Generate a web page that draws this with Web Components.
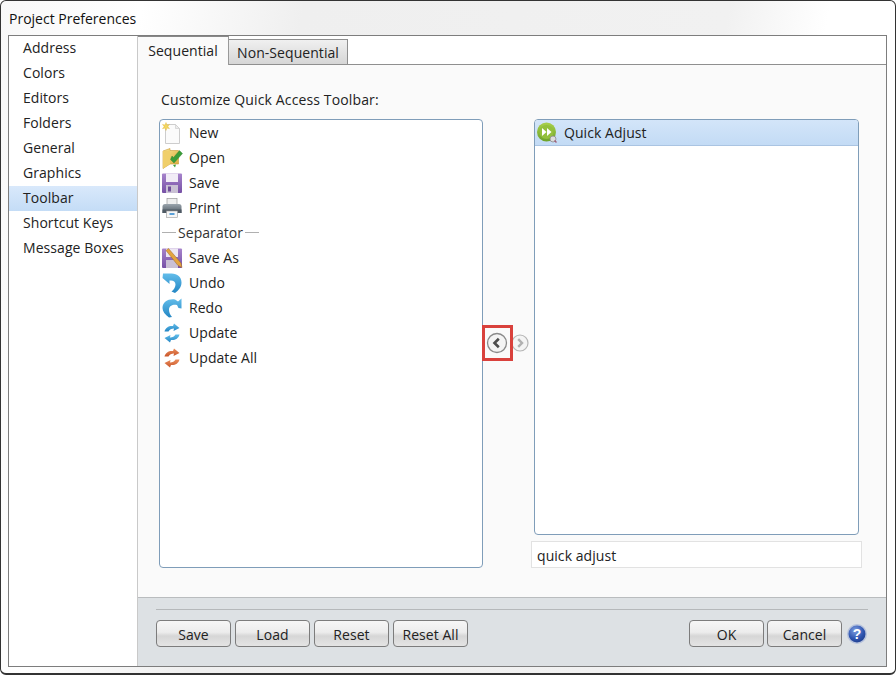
<!DOCTYPE html>
<html>
<head>
<meta charset="utf-8">
<title>Project Preferences</title>
<style>
  html, body { margin: 0; padding: 0; width: 896px; height: 675px; overflow: hidden; background: #fff; }
  body { font: 14px "Open Sans", "Liberation Sans", sans-serif; color: #222; letter-spacing: .06px; }
</style>
</head>
<body>

<pp-window heading="Project Preferences">
  <pp-nav slot="nav">
    <pp-nav-item>Address</pp-nav-item>
    <pp-nav-item>Colors</pp-nav-item>
    <pp-nav-item>Editors</pp-nav-item>
    <pp-nav-item>Folders</pp-nav-item>
    <pp-nav-item>General</pp-nav-item>
    <pp-nav-item>Graphics</pp-nav-item>
    <pp-nav-item selected>Toolbar</pp-nav-item>
    <pp-nav-item>Shortcut Keys</pp-nav-item>
    <pp-nav-item>Message Boxes</pp-nav-item>
  </pp-nav>

  <pp-tabs slot="tabs"></pp-tabs>

  <pp-toolbar-editor slot="body">
    <pp-listbox slot="left">
      <pp-row icon="new">New</pp-row>
      <pp-row icon="open">Open</pp-row>
      <pp-row icon="save">Save</pp-row>
      <pp-row icon="print">Print</pp-row>
      <pp-separator>Separator</pp-separator>
      <pp-row icon="saveas">Save As</pp-row>
      <pp-row icon="undo">Undo</pp-row>
      <pp-row icon="redo">Redo</pp-row>
      <pp-row icon="update">Update</pp-row>
      <pp-row icon="updateall">Update All</pp-row>
    </pp-listbox>
    <pp-listbox slot="right">
      <pp-row icon="quick" selected>Quick Adjust</pp-row>
    </pp-listbox>
  </pp-toolbar-editor>

  <pp-button slot="footer-left">Save</pp-button>
  <pp-button slot="footer-left">Load</pp-button>
  <pp-button slot="footer-left">Reset</pp-button>
  <pp-button slot="footer-left">Reset All</pp-button>
  <pp-button slot="footer-right">OK</pp-button>
  <pp-button slot="footer-right" style="margin-left:-1px">Cancel</pp-button>
  <pp-help slot="footer-right"></pp-help>
</pp-window>

<script>
class EzElement extends HTMLElement {
  get stylez () { return `:host {display: block}`; }
  constructor () {
    super();
    this.shadow = this.attachShadow({ mode: 'open' });
  }
  connectedCallback () {
    this.shadow.innerHTML = `<style>${this.stylez}</style>${this.render()}`;
  }
  render () { return '<slot></slot>'; }
}

class PPWindow extends EzElement {
  get stylez () {
    return `
    :host {
      display: flex; flex-direction: column; box-sizing: border-box;
      width: 896px; height: 675px; padding: 0 8px 6px 7px;
      border: 1px solid #333; border-radius: 6px;
      border-bottom-width: 2px;
      background: linear-gradient(100deg, #f8f8f8 0%, #fff 14%, #efefef 30%, #f1f1f1 72%, #fff 82%);
    }
    header { height: 34px; line-height: 36px; padding-left: 1px; font-size: 14px; color: #111; flex: none; letter-spacing: 0; }
    .frame { flex: 1; display: flex; border: 1px solid #7d7d7d; min-height: 0; width: 879px; box-sizing: border-box; background: #fff; }
    .nav { width: 128px; flex: none; background: #fff; }
    .main { flex: 1; display: flex; flex-direction: column; min-width: 0; border-left: 1px solid #c9c9c9; }
    .content { flex: 1; display: flex; flex-direction: column; background: #fafafa; min-height: 0; }
    .footer { height: 69px; flex: none; box-sizing: border-box; background: #dde1e4; border-top: 1px solid #b9bcbe; padding: 11px 18px 0 18px; }
    .rule { height: 1px; background: #b5b8ba; margin-bottom: 10px; }
    .buttons { display: flex; justify-content: space-between; }
    .group { display: flex; gap: 4px; align-items: center; }
    `;
  }
  render () {
    return `
    <header>${this.getAttribute('heading')}</header>
    <div class="frame">
      <div class="nav"><slot name="nav"></slot></div>
      <div class="main">
        <div class="content">
          <slot name="tabs"></slot>
          <slot name="body"></slot>
        </div>
        <div class="footer">
          <div class="rule"></div>
          <div class="buttons">
            <div class="group"><slot name="footer-left"></slot></div>
            <div class="group"><slot name="footer-right"></slot></div>
          </div>
        </div>
      </div>
    </div>`;
  }
}

class PPNav extends EzElement {}

class PPNavItem extends EzElement {
  get stylez () {
    return `
    :host { display: block; height: 25px; line-height: 24px; padding-left: 14px; color: #222; }
    :host([selected]) { background: linear-gradient(#d9e9fb, #c4dcf6); }
    `;
  }
}

class PPTabs extends EzElement {
  get stylez () {
    return `
    :host { display: flex; height: 29px; align-items: flex-end; box-sizing: border-box; border-bottom: 1px solid #8f8f8f; flex: none; background: #fff; }
    .tab { box-sizing: border-box; }
    .on { width: 91px; height: 29px; line-height: 28px; text-align: center; background: #fafafa; border-top: 1px solid #888; border-right: 1px solid #999; margin-bottom: -1px; position: relative; }
    .off { width: 119px; height: 25px; line-height: 26px; text-align: center; background: linear-gradient(#f0f0f0, #d6d6d6); border: 1px solid #8e8e8e; border-bottom: 0; border-left: 0; }
    `;
  }
  render () {
    return `<div class="tab on">Sequential</div><div class="tab off">Non-Sequential</div>`;
  }
}

class PPToolbarEditor extends EzElement {
  get stylez () {
    return `
    :host { display: block; flex: 1; padding: 27px 0 0 21px; }
    .label { height: 27px; line-height: 16px; padding-left: 2px; letter-spacing: .13px; }
    .cols { display: grid; grid-template-columns: 324px 51px 325px; grid-template-rows: 416px 6px 27px; height: 449px; }
    .left { grid-row: 1 / 4; display: flex; }
    .arrows { grid-row: 1 / 4; position: relative; }
    .arrows .in { position: absolute; left: 3px; top: 213px; display: flex; gap: 3px; align-items: center; }
    .right { display: flex; }
    .filter { grid-column: 3; grid-row: 3; margin: 0 -3px; box-sizing: border-box; border: 1px solid #e2e2e2; background: #fff; line-height: 27px; padding-left: 5px; color: #222; height: 27px; }
    .hl { position: absolute; left: -1px; top: 206px; width: 31px; height: 36px; box-sizing: border-box; border: 3px solid #d9413c; }
    `;
  }
  render () {
    return `
    <div class="label">Customize Quick Access Toolbar:</div>
    <div class="cols">
      <div class="left"><slot name="left"></slot></div>
      <div class="arrows">
        <div class="in">
          <svg width="22" height="22" viewBox="0 0 22 22"><circle cx="11" cy="11" r="9.500" fill="#f4f4f4" stroke="#8a8a8a" stroke-width="1.300"/><path d="M12.800 6.800 8.500 11l4.300 4.200" fill="none" stroke="#4d4d4d" stroke-width="2.600"/></svg>
          <svg width="18" height="18" viewBox="0 0 18 18"><circle cx="9" cy="9" r="8" fill="#f4f4f4" stroke="#b5b5b5" stroke-width="1.200"/><path d="M7.200 5.200 11 9l-3.800 3.800" fill="none" stroke="#b0b0b0" stroke-width="2.400"/></svg>
        </div>
        <div class="hl"></div>
      </div>
      <div class="right"><slot name="right"></slot></div>
      <div class="filter">quick adjust</div>
    </div>`;
  }
}

class PPListbox extends EzElement {
  get stylez () {
    return `
    :host { display: block; flex: 1; box-sizing: border-box; border: 1px solid #7f9db9; border-radius: 4px; background: #fff; overflow: hidden; }
    `;
  }
}

// gradient ids don't cross shadow roots, so every icon svg carries its own defs
const DEFS = `<defs>
  <linearGradient id="gFolder" x1="0" y1="0" x2="1" y2="1"><stop offset="0" stop-color="#f9e691"/><stop offset="1" stop-color="#d9a63a"/></linearGradient>
  <linearGradient id="gPurple" x1="0" y1="0" x2="0" y2="1"><stop offset="0" stop-color="#a784cc"/><stop offset="1" stop-color="#7650a5"/></linearGradient>
  <linearGradient id="gBlue" x1="0" y1="0" x2="0" y2="1"><stop offset="0" stop-color="#63bdea"/><stop offset="1" stop-color="#2386c4"/></linearGradient>
  <linearGradient id="gOrange" x1="0" y1="0" x2="0" y2="1"><stop offset="0" stop-color="#ea8d5c"/><stop offset="1" stop-color="#c9562a"/></linearGradient>
  <linearGradient id="gGreen" x1="0" y1="0" x2="0" y2="1"><stop offset="0" stop-color="#a9d04c"/><stop offset="1" stop-color="#6ca32a"/></linearGradient>
  <linearGradient id="gGrey" x1="0" y1="0" x2="0" y2="1"><stop offset="0" stop-color="#9aa4ac"/><stop offset="1" stop-color="#505b65"/></linearGradient>
</defs>`;

const ICONS = {
  new: `<path d="M4.500 2.500h10l4 4v15h-14z" fill="#fbfbfb" stroke="#cdcdcd"/><path d="M14.500 2.500v4h4z" fill="#ececec" stroke="#cdcdcd" stroke-width=".7"/><path d="M5 .5l1 2.500 2.500-.6-1.600 2.100 1.600 2.200L6 6 5 8.500 4 6l-2.500.7 1.600-2.200L1.500 2.400 4 3z" fill="#f3d65e" stroke="#e4b93c" stroke-width=".4"/>`,
  open: `<path d="M2 4 9 1.500v2h8.500V17H9l-7 4.500z" fill="url(#gFolder)" stroke="#c99a35" stroke-width=".6"/><path d="M9 3.500 2 4v17.500L9 17z" fill="#f0cf6a"/><path d="M9.500 12.500 13 16l8.500-9.500-3-3-6 7-1.500-1.500z" fill="#3a9c38" stroke="#2d8030" stroke-width=".4"/><path d="M12 18l2 2.500 1-3z" fill="#3a9c38"/>`,
  save: `<rect x="1" y="1.500" width="20" height="19.500" rx="1" fill="url(#gPurple)"/><rect x="5" y="1.500" width="12" height="8.500" fill="#f1ecf6"/><rect x="5" y="13" width="12" height="8" fill="#c9c0d4"/><rect x="7" y="14.500" width="3" height="5" fill="#6f4d99"/>`,
  print: `<rect x="6" y="1.500" width="10" height="6" fill="#eee" stroke="#999" stroke-width=".7"/><path d="M1.500 9.500q0-2.500 2.500-2.500h14q2.500 0 2.500 2.500V16h-19z" fill="url(#gGrey)"/><rect x="1.500" y="12.500" width="19" height="3.500" fill="#4f5a64"/><rect x="5.500" y="14" width="11" height="6.500" fill="#f6f6f6" stroke="#999" stroke-width=".6"/><rect x="8.500" y="16" width="5" height="2" fill="#5aa0d8"/>`,
  saveas: `<rect x="1" y="1.500" width="20" height="19.500" rx="1" fill="url(#gPurple)"/><rect x="5" y="1.500" width="12" height="8.500" fill="#ece6f2"/><rect x="5" y="13" width="12" height="8" fill="#c9c0d4"/><path d="M5 3.500 7.500 1.500 20 16l1 4.500-4-2z" fill="#e3a43f" stroke="#9f642a" stroke-width=".5"/>`,
  undo: `<path d="M2 1.500h8.500c6 0 10 3.500 10 9 0 4.500-3 8-6.500 10.500l-3.500-1.500c2.500-2 4-4.500 4-7 0-2.500-2-4-4.500-4H8.500v3.500L1.500 6z" fill="url(#gBlue)"/>`,
  redo: `<path d="M20.500 1.500v10l-3-.5-1.500-3c-3.500-1-8 .5-8 4.500 0 3 1 5 3 7.500l-3 .5C4 17.500 1.500 14.500 1.500 11 1.500 5 7.500 1.500 14 2.500l3 2z" fill="url(#gBlue)"/>`,
  update: `<path d="M3.500 9.500C4.500 5.500 8 3.500 12 4l1-2.500 5.500 4.500-6 3 .5-2.500c-2.500 0-4.500 1-5.500 3z" fill="url(#gBlue)"/><path d="M18.500 12.500c-1 4-4.500 6-8.500 5.500l-1 2.500-5.500-4.500 6-3-.5 2.500c2.500 0 4.500-1 5.500-3z" fill="url(#gBlue)"/>`,
  updateall: `<path d="M3.500 9.500C4.500 5.500 8 3.500 12 4l1-2.500 5.500 4.500-6 3 .5-2.500c-2.500 0-4.500 1-5.500 3z" fill="url(#gOrange)"/><path d="M18.500 12.500c-1 4-4.500 6-8.500 5.500l-1 2.500-5.500-4.500 6-3-.5 2.500c2.500 0 4.500-1 5.500-3z" fill="url(#gOrange)"/>`,
  quick: `<circle cx="10.500" cy="10" r="9.500" fill="url(#gGreen)"/><circle cx="10.500" cy="10" r="7" fill="#93c03c"/><path d="M6 6v8l4.500-4zM11 6v8l4.500-4z" fill="#fff"/><circle cx="17" cy="17" r="3" fill="#dcdcdc" stroke="#8a8a8a" stroke-width=".8"/><path d="M18.500 18.500l2 2" stroke="#a0607a" stroke-width="1.500"/>`
};

class PPRow extends EzElement {
  get stylez () {
    return `
    :host { display: flex; align-items: center; height: 25px; color: #222; box-sizing: border-box; }
    :host([selected]) { height: 26px; background: linear-gradient(#d3e5f9, #c3dbf5); border-bottom: 1px solid #aac4e2; }
    .ic { display: block; width: 22px; height: 22px; margin: 0 6px 0 1px; flex: none; }
    `;
  }
  render () {
    return `<svg class="ic" viewBox="0 0 22 22">${DEFS}${ICONS[this.getAttribute('icon')]}</svg><slot></slot>`;
  }
}

class PPSeparator extends EzElement {
  get stylez () {
    return `
    :host { display: flex; align-items: center; height: 25px; padding-left: 2px; color: #333; }
    i { display: block; width: 14px; height: 1px; background: #b0b0b0; flex: none; }
    span { padding: 0 2px; }
    `;
  }
  render () { return `<i></i><span><slot></slot></span><i></i>`; }
}

class PPButton extends EzElement {
  get stylez () {
    return `
    :host { display: block; box-sizing: border-box; width: 75px; height: 27px; line-height: 28px; text-align: center; border: 1px solid #7c7c7c; border-radius: 4px; color: #222; background: linear-gradient(#f6f6f6 0%, #ececec 45%, #d6d6d6 60%, #e4e4e4 100%); }
    `;
  }
}

class PPHelp extends EzElement {
  get stylez () { return `:host { display: block; }`; }
  render () {
    return `<svg width="22" height="22" viewBox="0 0 22 22" style="display:block"><defs><radialGradient id="gHelp" cx=".4" cy=".3" r=".8"><stop offset="0" stop-color="#7f9fe0"/><stop offset=".6" stop-color="#2f55b0"/><stop offset="1" stop-color="#1d3a86"/></radialGradient></defs><circle cx="11" cy="11" r="10" fill="#b6c2dc"/><circle cx="11" cy="11" r="8.500" fill="url(#gHelp)"/><text x="11" y="16" text-anchor="middle" font-family="Liberation Sans" font-weight="700" font-size="14" fill="#fff">?</text></svg>`;
  }
}

customElements.define('pp-window', PPWindow);
customElements.define('pp-nav', PPNav);
customElements.define('pp-nav-item', PPNavItem);
customElements.define('pp-tabs', PPTabs);
customElements.define('pp-toolbar-editor', PPToolbarEditor);
customElements.define('pp-listbox', PPListbox);
customElements.define('pp-row', PPRow);
customElements.define('pp-separator', PPSeparator);
customElements.define('pp-button', PPButton);
customElements.define('pp-help', PPHelp);
</script>
</body>
</html>
